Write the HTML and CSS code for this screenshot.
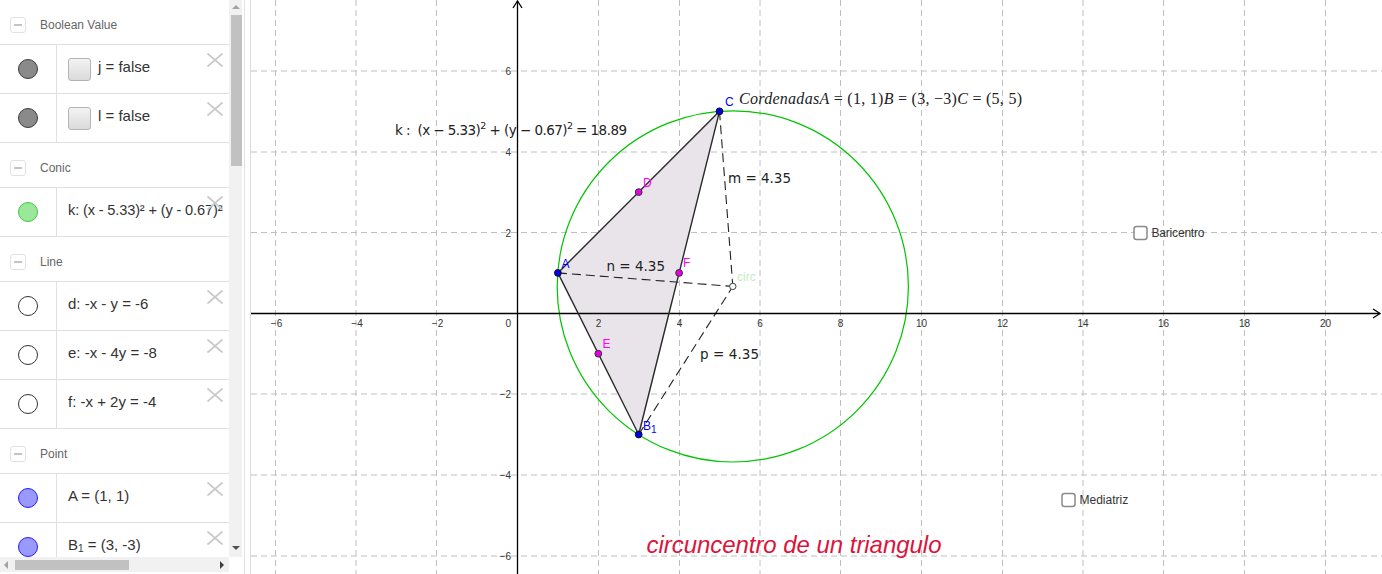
FILE: index.html
```html
<!DOCTYPE html>
<html lang="es">
<head>
<meta charset="utf-8">
<title>circuncentro de un triangulo</title>
<link rel="stylesheet" href="styles.css">
</head>
<body>
<div class="app">
  <aside class="algebra">
    <div class="av-top">
      <div class="av-list">
        <div class="group-head"><span class="toggle"></span><span class="group-title">Boolean Value</span></div>
        <div class="item">
          <div class="marble-col"><span class="marble m-gray"></span></div>
          <div class="item-body"><span class="cb"></span><span class="expr">j = false</span></div>
          <svg class="del" viewBox="0 0 16 14"><path d="M0.5 0.5 L15.5 13.5 M15.5 0.5 L0.5 13.5"/></svg>
        </div>
        <div class="item">
          <div class="marble-col"><span class="marble m-gray"></span></div>
          <div class="item-body"><span class="cb"></span><span class="expr">l = false</span></div>
          <svg class="del" viewBox="0 0 16 14"><path d="M0.5 0.5 L15.5 13.5 M15.5 0.5 L0.5 13.5"/></svg>
        </div>
        <div class="group-head"><span class="toggle"></span><span class="group-title">Conic</span></div>
        <div class="item">
          <div class="marble-col"><span class="marble m-green"></span></div>
          <div class="item-body"><span class="expr expr-tight">k: (x - 5.33)² + (y - 0.67)²</span></div>
          <svg class="del" viewBox="0 0 16 14"><path d="M0.5 0.5 L15.5 13.5 M15.5 0.5 L0.5 13.5"/></svg>
        </div>
        <div class="group-head"><span class="toggle"></span><span class="group-title">Line</span></div>
        <div class="item">
          <div class="marble-col"><span class="marble m-white"></span></div>
          <div class="item-body"><span class="expr">d: -x - y = -6</span></div>
          <svg class="del" viewBox="0 0 16 14"><path d="M0.5 0.5 L15.5 13.5 M15.5 0.5 L0.5 13.5"/></svg>
        </div>
        <div class="item">
          <div class="marble-col"><span class="marble m-white"></span></div>
          <div class="item-body"><span class="expr">e: -x - 4y = -8</span></div>
          <svg class="del" viewBox="0 0 16 14"><path d="M0.5 0.5 L15.5 13.5 M15.5 0.5 L0.5 13.5"/></svg>
        </div>
        <div class="item">
          <div class="marble-col"><span class="marble m-white"></span></div>
          <div class="item-body"><span class="expr">f: -x + 2y = -4</span></div>
          <svg class="del" viewBox="0 0 16 14"><path d="M0.5 0.5 L15.5 13.5 M15.5 0.5 L0.5 13.5"/></svg>
        </div>
        <div class="group-head"><span class="toggle"></span><span class="group-title">Point</span></div>
        <div class="item">
          <div class="marble-col"><span class="marble m-blue"></span></div>
          <div class="item-body"><span class="expr">A = (1, 1)</span></div>
          <svg class="del" viewBox="0 0 16 14"><path d="M0.5 0.5 L15.5 13.5 M15.5 0.5 L0.5 13.5"/></svg>
        </div>
        <div class="item">
          <div class="marble-col"><span class="marble m-blue"></span></div>
          <div class="item-body"><span class="expr">B<sub>1</sub> = (3, -3)</span></div>
          <svg class="del" viewBox="0 0 16 14"><path d="M0.5 0.5 L15.5 13.5 M15.5 0.5 L0.5 13.5"/></svg>
        </div>
      </div>
      <div class="vscroll">
        <span class="arr arr-up"></span>
        <span class="vthumb"></span>
        <span class="vfill"></span>
        <span class="arr arr-down"></span>
      </div>
    </div>
    <div class="hscroll">
      <span class="arr arr-left"></span>
      <span class="hthumb"></span>
      <span class="hfill"></span>
      <span class="arr arr-right"></span>
    </div>
  </aside>
  <div class="splitter"></div>
  <main class="graphics">
    <svg class="canvas" viewBox="251 0 1131 574" width="1131" height="574">
      <g class="grid">
        <line x1="275.5" y1="0" x2="275.5" y2="574"/>
        <line x1="356" y1="0" x2="356" y2="574"/>
        <line x1="436.5" y1="0" x2="436.5" y2="574"/>
        <line x1="598.5" y1="0" x2="598.5" y2="574"/>
        <line x1="679.5" y1="0" x2="679.5" y2="574"/>
        <line x1="760" y1="0" x2="760" y2="574"/>
        <line x1="840.5" y1="0" x2="840.5" y2="574"/>
        <line x1="921.5" y1="0" x2="921.5" y2="574"/>
        <line x1="1002.5" y1="0" x2="1002.5" y2="574"/>
        <line x1="1083" y1="0" x2="1083" y2="574"/>
        <line x1="1163.5" y1="0" x2="1163.5" y2="574"/>
        <line x1="1244.5" y1="0" x2="1244.5" y2="574"/>
        <line x1="1325.5" y1="0" x2="1325.5" y2="574"/>
        <line x1="251" y1="71" x2="1382" y2="71"/>
        <line x1="251" y1="152" x2="1382" y2="152"/>
        <line x1="251" y1="232.5" x2="1382" y2="232.5"/>
        <line x1="251" y1="394" x2="1382" y2="394"/>
        <line x1="251" y1="475" x2="1382" y2="475"/>
        <line x1="251" y1="556" x2="1382" y2="556"/>
      </g>

      <polygon class="poly" points="557.9,272.9 719.5,111.3 638.7,434.5"/>
      <circle class="conic" cx="732.8" cy="286.4" r="175.6"/>

      <g class="dash">
        <line x1="557.9" y1="272.9" x2="732.8" y2="286.4"/>
        <line x1="719.5" y1="111.3" x2="732.8" y2="286.4"/>
        <line x1="638.7" y1="434.5" x2="732.8" y2="286.4"/>
      </g>

      <g class="axis">
        <line x1="251" y1="313.5" x2="1380" y2="313.5"/>
        <line x1="517.5" y1="1" x2="517.5" y2="574"/>
        <path d="M1373 309 L1380 313.5 L1373 318"/>
        <path d="M513 8 L517.5 1 L522 8"/>
      </g>

      <g class="ticks xt">
        <text x="276.5" y="327">−6</text>
        <text x="357" y="327">−4</text>
        <text x="437.5" y="327">−2</text>
        <text x="598.5" y="327">2</text>
        <text x="679.5" y="327">4</text>
        <text x="760" y="327">6</text>
        <text x="840.5" y="327">8</text>
        <text x="921.5" y="327">10</text>
        <text x="1002.5" y="327">12</text>
        <text x="1083" y="327">14</text>
        <text x="1163.5" y="327">16</text>
        <text x="1244.5" y="327">18</text>
        <text x="1325.5" y="327">20</text>
      </g>
      <g class="ticks yt">
        <text x="511" y="327">0</text>
        <text x="511" y="75">6</text>
        <text x="511" y="156">4</text>
        <text x="511" y="236.5">2</text>
        <text x="511" y="398">−2</text>
        <text x="511" y="479">−4</text>
        <text x="511" y="560">−6</text>
      </g>

      <g class="edges">
        <line x1="557.9" y1="272.9" x2="719.5" y2="111.3"/>
        <line x1="719.5" y1="111.3" x2="638.7" y2="434.5"/>
        <line x1="638.7" y1="434.5" x2="557.9" y2="272.9"/>
      </g>

      <circle class="pt-circ" cx="732.8" cy="286.4" r="3.2"/>
      <text class="lbl-circ" x="737" y="281">circ</text>

      <circle class="pt-mag" cx="638.7" cy="192.1" r="3.4"/>
      <circle class="pt-mag" cx="598.3" cy="353.7" r="3.4"/>
      <circle class="pt-mag" cx="679.1" cy="272.9" r="3.4"/>
      <circle class="pt-blue" cx="557.9" cy="272.9" r="3.4"/>
      <circle class="pt-blue" cx="719.5" cy="111.3" r="3.4"/>
      <circle class="pt-blue" cx="638.7" cy="434.5" r="3.4"/>

      <text class="plbl blue" x="561.5" y="267.5">A</text>
      <text class="plbl blue" x="725" y="106">C</text>
      <text class="plbl blue" x="643" y="429.5">B<tspan class="sub" dy="3">1</tspan></text>
      <text class="plbl mag" x="643" y="187">D</text>
      <text class="plbl mag" x="602.5" y="348">E</text>
      <text class="plbl mag" x="683" y="267">F</text>

      <text class="val" x="728" y="183" textLength="63">m = 4.35</text>
      <text class="val" x="606.5" y="271" textLength="58.5">n = 4.35</text>
      <text class="val" x="700" y="358.5" textLength="59">p = 4.35</text>

      <text class="val" x="395" y="135" textLength="232">k :  (x − 5.33)<tspan class="sup" dy="-6">2</tspan><tspan dy="6"> + (y − 0.67)</tspan><tspan class="sup" dy="-6">2</tspan><tspan dy="6"> = 18.89</tspan></text>

      <text class="tex" x="739" y="104" textLength="283"><tspan class="it">CordenadasA</tspan> = (1, 1)<tspan class="it">B</tspan> = (3, −3)<tspan class="it">C</tspan> = (5, 5)</text>

      <rect class="chk" x="1134" y="226.5" width="13" height="13" rx="2.5"/>
      <text class="chk-lbl" x="1151.5" y="237" textLength="53">Baricentro</text>
      <rect class="chk" x="1062" y="493.5" width="13" height="13" rx="2.5"/>
      <text class="chk-lbl" x="1079.5" y="504">Mediatriz</text>

      <text class="title" x="646.5" y="553" textLength="295">circuncentro de un triangulo</text>
    </svg>
  </main>
</div>
</body>
</html>
```
FILE: styles.css
```css
html, body {
  margin: 0;
  padding: 0;
  background: #fff;
}
body {
  width: 1382px;
  height: 574px;
  overflow: hidden;
  font-family: "Liberation Sans", Arial, sans-serif;
}
.app {
  display: flex;
  width: 1382px;
  height: 574px;
}

/* ---------- algebra view ---------- */
.algebra {
  width: 244px;
  height: 574px;
  border-right: 1px solid #e2e2e2;
  display: flex;
  flex-direction: column;
  flex: none;
}
.av-top {
  display: flex;
  height: 557px;
  padding-right: 2px;
}
.av-list {
  width: 229px;
  overflow: hidden;
  flex: none;
}
.group-head {
  height: 39px;
  padding-top: 5px;
  border-bottom: 1px solid #e0e0e0;
  display: flex;
  align-items: center;
}
.toggle {
  width: 14px;
  height: 14px;
  margin-left: 10px;
  margin-top: 1px;
  border: 1px solid #e2e2e2;
  border-radius: 3px;
  display: flex;
  align-items: center;
  justify-content: center;
  flex: none;
}
.toggle::before {
  content: "";
  width: 8px;
  height: 1.5px;
  background: #c4c4c4;
}
.group-title {
  margin-left: 14px;
  font-size: 12px;
  color: #666;
}
.item {
  position: relative;
  height: 48px;
  border-bottom: 1px solid #e0e0e0;
  display: flex;
}
.marble-col {
  width: 56px;
  border-right: 1px solid #e0e0e0;
  display: flex;
  align-items: center;
  justify-content: center;
  flex: none;
}
.marble {
  width: 20px;
  height: 20px;
  box-sizing: border-box;
  border-radius: 50%;
  border: 1px solid #333;
}
.m-gray { background: #8a8a8a; border-color: #3a3a3a; }
.m-green { background: #9be89b; border-color: #3cc83c; }
.m-white { background: #fff; border: 1.3px solid #333; }
.m-blue { background: #9999ff; border-color: #2020f0; }
.item-body {
  display: flex;
  align-items: center;
  padding-left: 11px;
  padding-bottom: 5px;
  white-space: nowrap;
  overflow: hidden;
  min-width: 0;
  flex: 1;
}
.cb {
  width: 23px;
  height: 23px;
  box-sizing: border-box;
  border: 1px solid #b4b4b4;
  border-radius: 3px;
  background: linear-gradient(#f3f3f3, #dadada);
  margin-right: 7px;
  margin-top: 5px;
  flex: none;
}
.expr {
  font-size: 15px;
  color: #333;
}
.expr-tight {
  font-size: 14.6px;
  letter-spacing: -0.15px;
}
.expr sub {
  font-size: 10px;
  vertical-align: -2px;
  line-height: 0;
}
.del {
  position: absolute;
  top: 8px;
  right: 6px;
  width: 16px;
  height: 14px;
  fill: none;
  stroke: #c8c8c8;
  stroke-width: 1.7;
}

/* scrollbars */
.vscroll {
  width: 13px;
  background: #f1f1f1;
  display: flex;
  flex-direction: column;
  align-items: flex-end;
  flex: none;
}
.vthumb {
  width: 11px;
  height: 151px;
  background: #c1c1c1;
  flex: none;
}
.vfill { flex: 1; }
.arr {
  flex: none;
  width: 0;
  height: 0;
}
.arr-up {
  align-self: center;
  margin: 5px 0 6px;
  border-left: 4px solid transparent;
  border-right: 4px solid transparent;
  border-bottom: 4px solid #a3a3a3;
}
.arr-down {
  align-self: center;
  margin: 0 0 7px;
  border-left: 4px solid transparent;
  border-right: 4px solid transparent;
  border-top: 4px solid #505050;
}
.hscroll {
  width: 229px;
  height: 15px;
  background: #f1f1f1;
  display: flex;
  align-items: center;
}
.arr-left {
  margin: 0 6px 0 4px;
  border-top: 4px solid transparent;
  border-bottom: 4px solid transparent;
  border-right: 4px solid #a3a3a3;
}
.hthumb {
  width: 114px;
  height: 10px;
  margin-left: 1px;
  background: #c1c1c1;
  flex: none;
}
.hfill { flex: 1; }
.arr-right {
  margin: 0 5px 0 0;
  border-top: 4px solid transparent;
  border-bottom: 4px solid transparent;
  border-left: 4px solid #404040;
}

.splitter {
  width: 5px;
  border-right: 1px solid #dcdcdc;
  flex: none;
}

/* ---------- graphics view ---------- */
.graphics {
  flex: 1;
  height: 574px;
  overflow: hidden;
}
.canvas {
  display: block;
}
.grid line {
  stroke: #c0c0c0;
  stroke-width: 1;
  stroke-dasharray: 6 4;
}
.axis line, .axis path {
  stroke: #000;
  stroke-width: 1.3;
  fill: none;
}
.ticks text {
  font-family: "Liberation Sans", Arial, sans-serif;
  font-size: 10px;
  fill: #333;
}
.xt text { text-anchor: middle; }
.yt text { text-anchor: end; }
.poly {
  fill: #e8e4ea;
  stroke: none;
}
.conic {
  fill: none;
  stroke: #00c400;
  stroke-width: 1.2;
}
.dash line {
  stroke: #222;
  stroke-width: 1.1;
  stroke-dasharray: 9 5;
}
.edges line {
  stroke: #2a2a2a;
  stroke-width: 1.4;
}
.pt-blue {
  fill: #0000ee;
  stroke: #111;
  stroke-width: 1;
}
.pt-mag {
  fill: #e600e6;
  stroke: #333;
  stroke-width: 1;
}
.pt-circ {
  fill: #f4fff4;
  stroke: #444;
  stroke-width: 1;
}
.lbl-circ {
  font-family: "Liberation Sans", Arial, sans-serif;
  font-size: 12px;
  fill: #c4ecc4;
}
.plbl {
  font-family: "Liberation Sans", Arial, sans-serif;
  font-size: 12px;
}
.plbl .sub { font-size: 10px; }
.blue { fill: #0000ff; }
.mag { fill: #ff00ff; }
.val {
  font-family: "DejaVu Sans", "Liberation Sans", sans-serif;
  font-size: 13.5px;
  fill: #222;
  white-space: pre;
}
.val .sup { font-size: 9.5px; }
.tex {
  font-family: "Liberation Serif", "DejaVu Serif", serif;
  font-size: 16px;
  fill: #222;
}
.tex .it { font-style: italic; }
.chk {
  fill: #fff;
  stroke: #8a8a8a;
  stroke-width: 1.5;
}
.chk-lbl {
  font-family: "Liberation Sans", Arial, sans-serif;
  font-size: 12px;
  fill: #333;
}
.title {
  font-family: "Liberation Sans", Arial, sans-serif;
  font-size: 24px;
  font-style: italic;
  fill: #dc143c;
}
```
